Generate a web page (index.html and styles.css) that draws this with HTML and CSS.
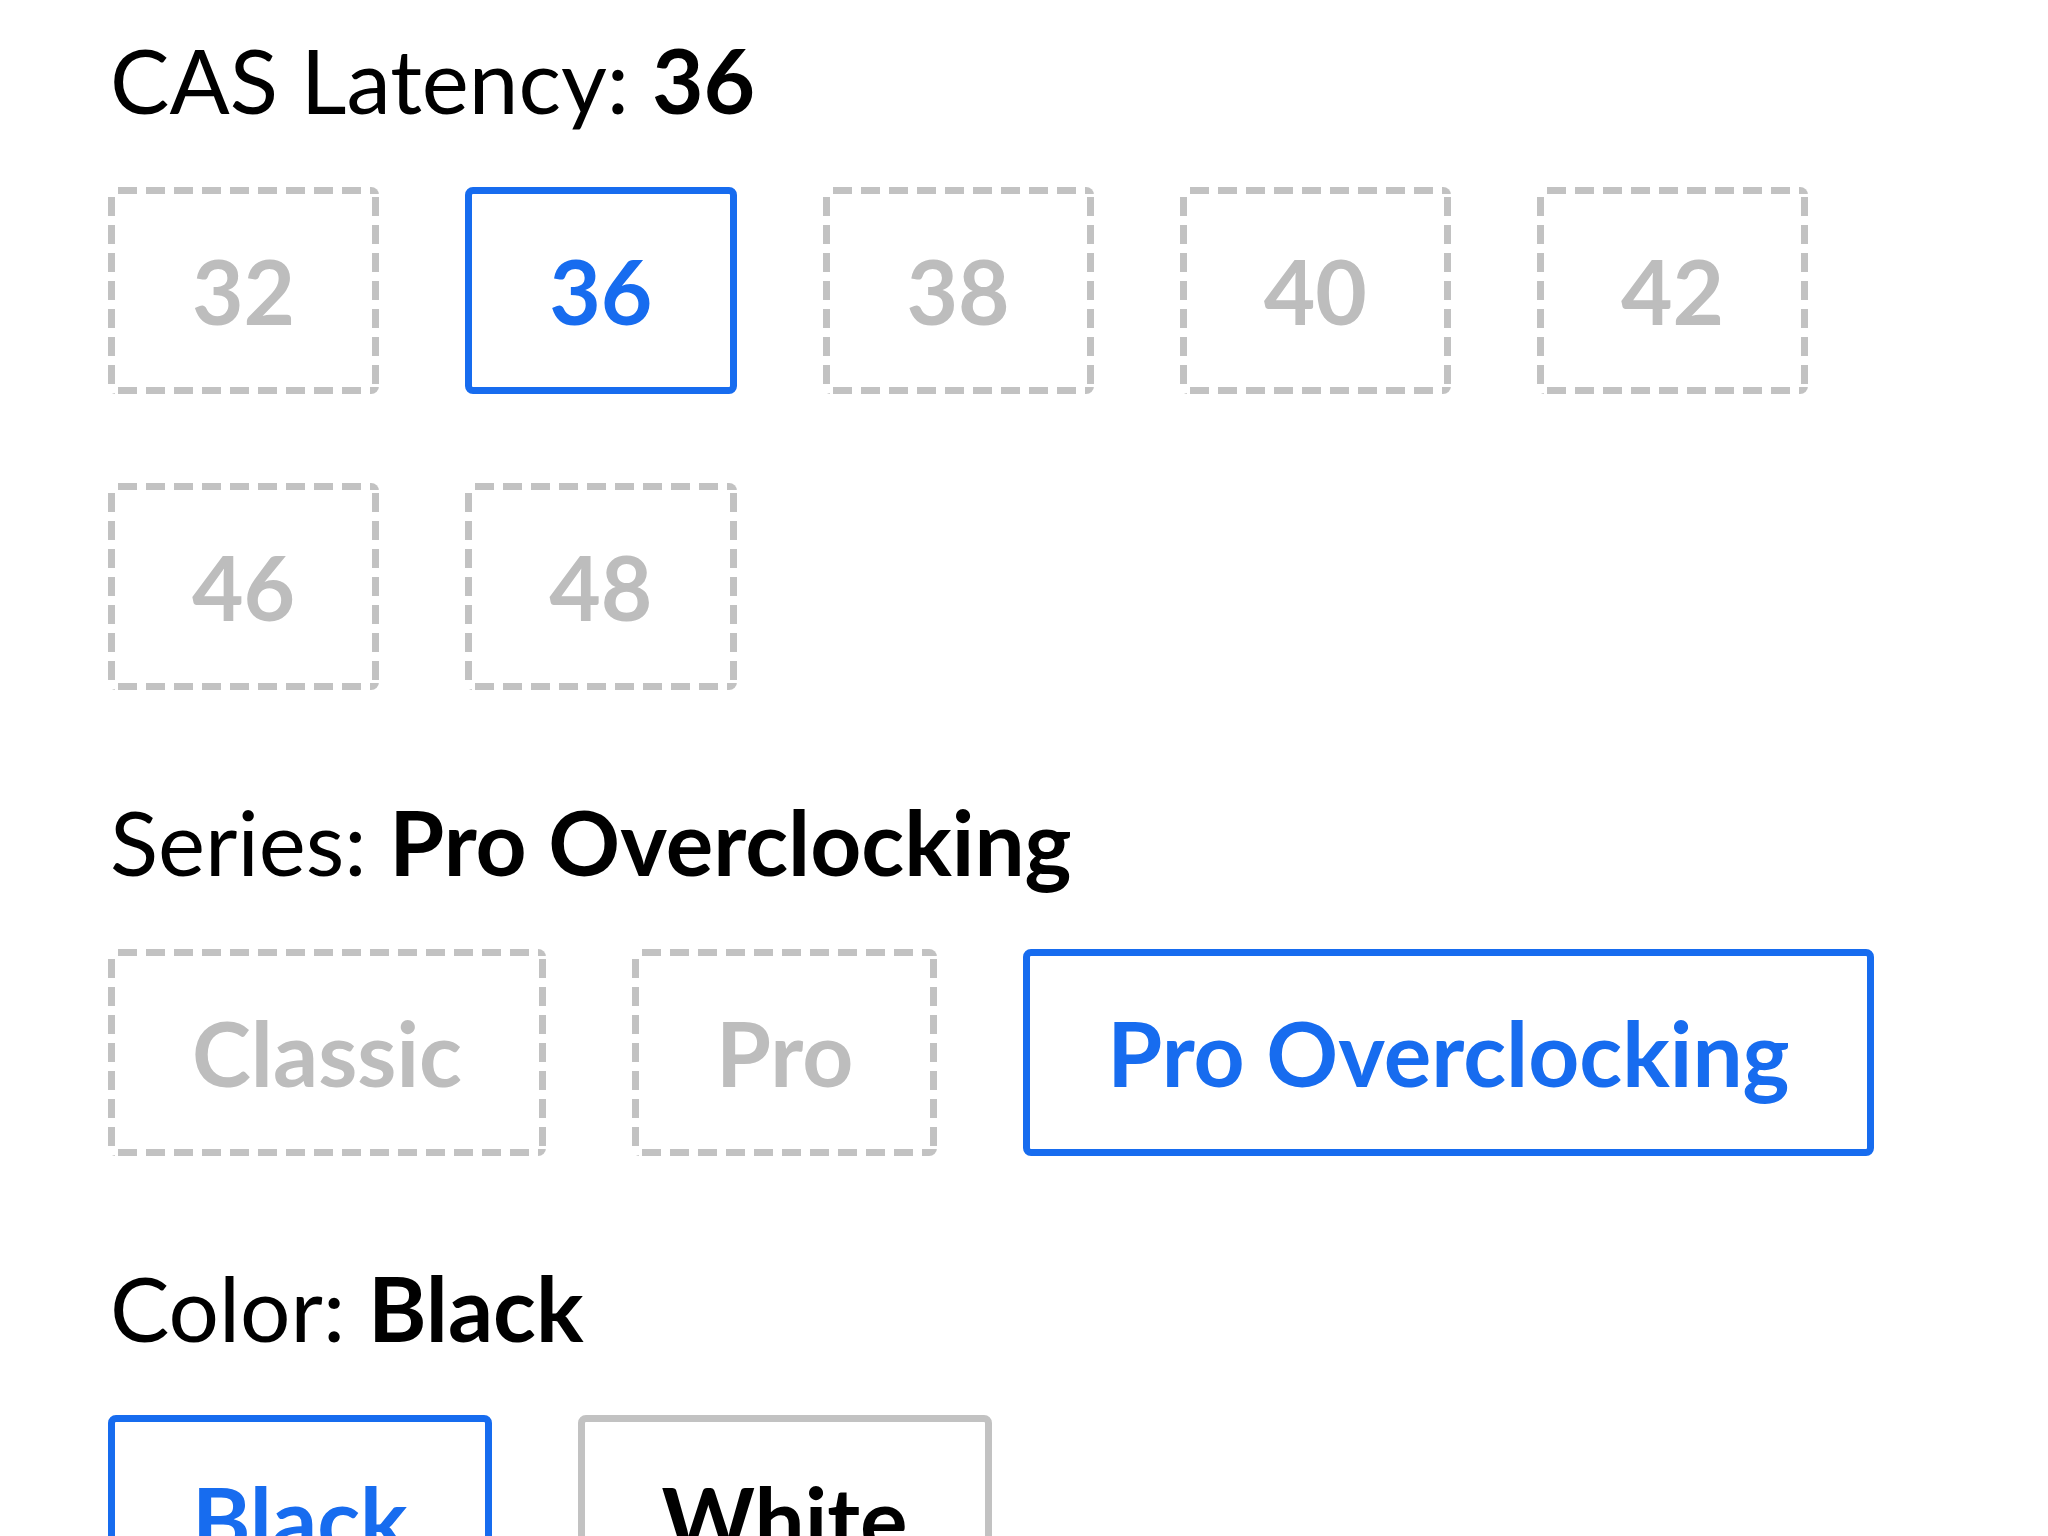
FILE: index.html
```html
<!DOCTYPE html>
<html lang="en">
<head>
  <meta charset="UTF-8" />
  <meta name="viewport" content="width=device-width, initial-scale=1.0" />
  <title>Memory options</title>
  <link rel="stylesheet" href="styles.css">
</head>
<body>
  <div class="options">
    <section class="option-group">
      <h2 class="option-label">CAS Latency: <strong>36</strong></h2>
      <div class="choices">
        <button type="button" class="choice unavailable">32</button>
        <button type="button" class="choice selected">36</button>
        <button type="button" class="choice unavailable">38</button>
        <button type="button" class="choice unavailable">40</button>
        <button type="button" class="choice unavailable">42</button>
        <button type="button" class="choice unavailable">46</button>
        <button type="button" class="choice unavailable">48</button>
      </div>
    </section>

    <section class="option-group">
      <h2 class="option-label">Series: <strong>Pro Overclocking</strong></h2>
      <div class="choices">
        <button type="button" class="choice unavailable">Classic</button>
        <button type="button" class="choice unavailable">Pro</button>
        <button type="button" class="choice selected">Pro Overclocking</button>
      </div>
    </section>

    <section class="option-group">
      <h2 class="option-label">Color: <strong>Black</strong></h2>
      <div class="choices">
        <button type="button" class="choice selected">Black</button>
        <button type="button" class="choice">White</button>
      </div>
    </section>
  </div>
</body>
</html>
```

FILE: styles.css
```css
html, body {
  margin: 0;
  padding: 0;
  background: #fff;
}
body {
  font-family: Lato, "Liberation Sans", sans-serif;
  color: #000;
}
.options {
  padding: 35px 108px 0 108px;
}
.option-group {
  margin-bottom: 107px;
}
.option-label {
  margin: 0 0 63px 2px;
  font-size: 89px;
  font-weight: 400;
  line-height: 1;
}
.option-label strong {
  font-weight: 700;
}

.choices {
  display: flex;
  flex-wrap: wrap;
  gap: 89px 86px;
}
.choice {
  font-family: inherit;
  font-size: 89px;
  font-weight: 700;
  line-height: 1;
  padding: 52px 77px;
  background: #fff;
  color: #000;
  border: 7px solid #c2c2c2;
  border-radius: 8px;
  cursor: pointer;
}

/* out of stock: long dashes drawn on the border box, the browser's own dashes are too short */
.choice.unavailable {
  color: #bdbdbd;
  border-color: transparent;
  background-color: #fff;
  background-image:
    repeating-linear-gradient(90deg, #c2c2c2 0 19px, transparent 19px 28px),
    repeating-linear-gradient(90deg, #c2c2c2 0 19px, transparent 19px 28px),
    repeating-linear-gradient(180deg, #c2c2c2 0 19px, transparent 19px 28px),
    repeating-linear-gradient(180deg, #c2c2c2 0 19px, transparent 19px 28px);
  background-size: 100% 7px, 100% 7px, 7px 100%, 7px 100%;
  background-position: 10px 0, 10px 100%, 0 10px, 100% 10px;
  background-repeat: no-repeat;
  background-origin: border-box;
}
.choice.selected {
  color: #176cef;
  border-color: #176cef;
}
```
